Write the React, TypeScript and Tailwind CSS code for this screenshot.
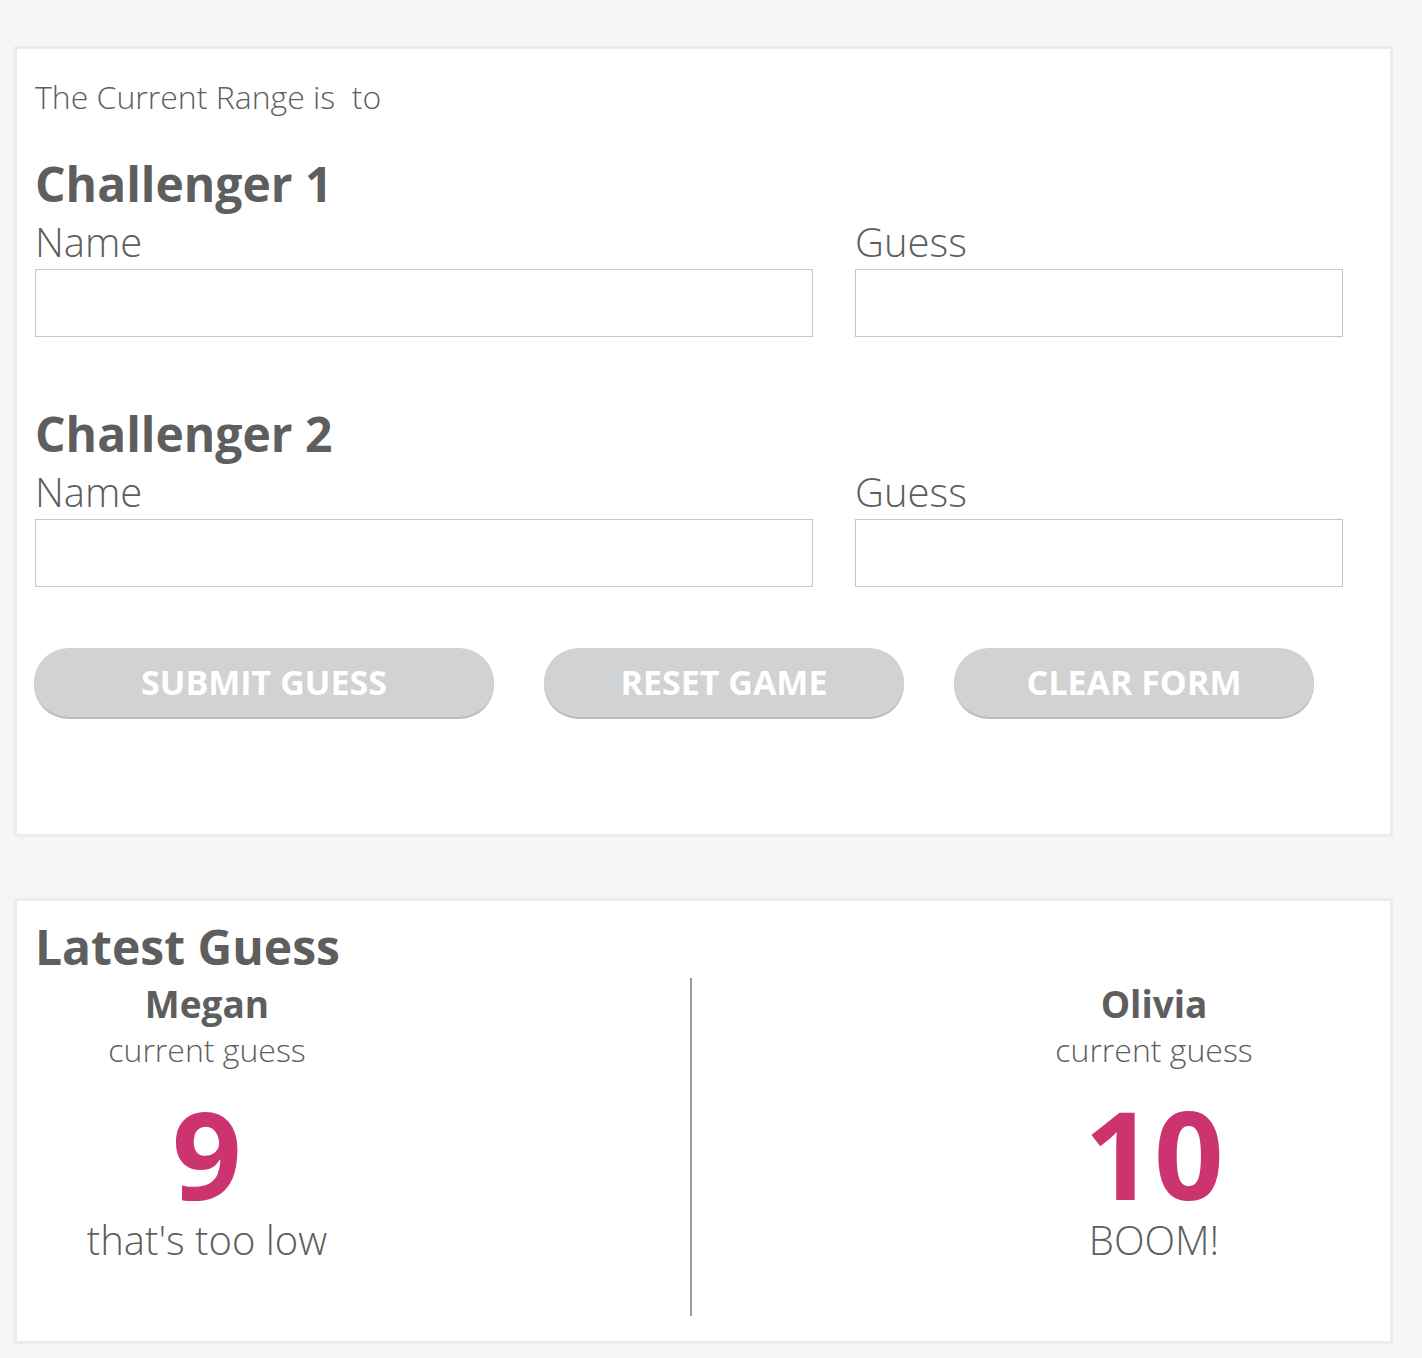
import React from "react";

// ─── Shared styles ────────────────────────────────────────────────────────────
const FONT = "font-['Open_Sans','Liberation_Sans',sans-serif]";

function Field({ label, wide }: { label: string; wide?: boolean }) {
  return (
    <div className={wide ? "w-[778px]" : "w-[488px]"}>
      <label className="block text-[40px] font-light leading-[52px] text-[#5e5e5e]">{label}</label>
      <input
        type="text"
        className="mt-[1px] block h-[68px] w-full border border-[#c6c6c6] bg-white outline-none"
      />
    </div>
  );
}

function Challenger({ n }: { n: number }) {
  return (
    <section>
      <h2 className="text-[48px] font-bold leading-[64px] text-[#5e5e5e]">Challenger {n}</h2>
      <div className="flex gap-[42px]">
        <Field label="Name" wide />
        <Field label="Guess" />
      </div>
    </section>
  );
}

function PillButton({ label, width }: { label: string; width: string }) {
  return (
    <button
      className={`${width} h-[69px] rounded-full bg-[#d1d2d4] text-[34px] font-bold uppercase text-white shadow-[0_2px_0_#b9babc]`}
    >
      {label}
    </button>
  );
}

function Player({ name, guess, verdict }: { name: string; guess: number; verdict: string }) {
  return (
    <div className="mt-[5px] flex flex-col items-center">
      <div className="text-[37px] font-bold leading-[48px] text-[#5e5e5e]">{name}</div>
      <div className="text-[32px] font-light leading-[44px] text-[#5e5e5e]">current guess</div>
      <div className="mt-[20px] text-[122px] font-bold leading-[122px] text-[#cc3470]">{guess}</div>
      <div className="text-[40px] font-light leading-[52px] text-[#5e5e5e]">{verdict}</div>
    </div>
  );
}

export default function App() {
  return (
    <div className={`${FONT} min-h-[1358px] bg-[#f6f6f6] pl-[14px] pr-[29px] pt-[46px]`}>
      {/* Form card */}
      <div className="h-[791px] border-[3px] border-[#ececec] bg-white px-[17px] pt-[28px]">
        <p className="pl-[1px] text-[32px] font-light leading-[40px] text-[#5e5e5e]">
          The Current Range is&nbsp; to
        </p>
        <div className="mt-[35px] flex flex-col gap-[65px] pl-[1px]">
          <Challenger n={1} />
          <Challenger n={2} />
        </div>
        <div className="mt-[61px] flex gap-[50px]">
          <PillButton label="Submit Guess" width="w-[460px]" />
          <PillButton label="Reset Game" width="w-[360px]" />
          <PillButton label="Clear Form" width="w-[360px]" />
        </div>
      </div>

      {/* Latest guess card */}
      <div className="mt-[61px] h-[446px] border-[3px] border-[#ececec] bg-white px-[18px] pt-[18px]">
        <h2 className="text-[48px] font-bold leading-[56px] text-[#5e5e5e]">Latest Guess</h2>
        <div className="flex">
          <div className="w-[344px]">
            <Player name="Megan" guess={9} verdict="that's too low" />
          </div>
          <div className="ml-[311px] mt-[3px] h-[338px] w-[2px] bg-[#9a9a9a]" />
          <div className="ml-[274px] w-[376px]">
            <Player name="Olivia" guess={10} verdict="BOOM!" />
          </div>
        </div>
      </div>
    </div>
  );
}
